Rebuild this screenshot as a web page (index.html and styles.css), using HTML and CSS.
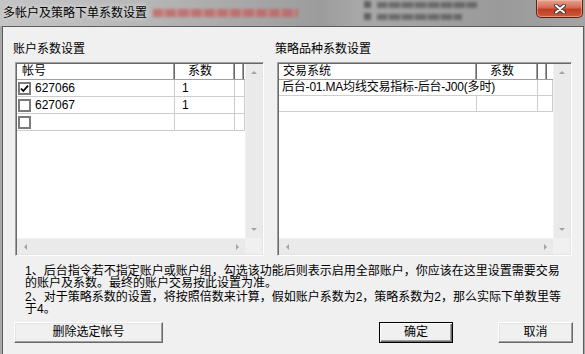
FILE: index.html
```html
<!DOCTYPE html>
<html lang="zh-CN">
<head>
    <meta charset="UTF-8">
    <title>多帐户及策略下单系数设置</title>
    <link rel="stylesheet" href="styles.css">
</head>
<body>
    <div class="window">
        <div class="titlebar">
            <span class="title">多帐户及策略下单系数设置</span>
            <div class="blur-red"></div>
            <div class="blur-dark">
                <div class="smudge"><i></i><b></b></div>
                <div class="smudge"><i></i><b class="short"></b></div>
            </div>
            <div class="close-btn">
                <svg width="14" height="10" viewBox="0 0 14 10">
                    <path d="M3 1.5 L11 8.5 M11 1.5 L3 8.5" stroke="#3c3c3c" stroke-width="4" stroke-linecap="round"/>
                    <path d="M3 1.5 L11 8.5 M11 1.5 L3 8.5" stroke="#fff" stroke-width="2" stroke-linecap="round"/>
                </svg>
            </div>
        </div>

        <div class="client">
            <div class="panels">
                <div class="panel panel-left">
                    <div class="panel-label">账户系数设置</div>
                    <div class="list">
                        <div class="list-body">
                            <div class="row head">
                                <div class="cell c-acc">帐号</div>
                                <div class="cell c-num">系数</div>
                                <div class="cell c-rest"></div>
                            </div>
                            <div class="row tall">
                                <div class="cell c-acc">
                                    <svg class="chk" width="13" height="13" viewBox="0 0 13 13">
                                        <rect x="1" y="1" width="11" height="11" fill="#fff" stroke="#7b7b7b" stroke-width="2"/>
                                        <path d="M3 6.5 L5.3 9 L10 3.6" fill="none" stroke="#000" stroke-width="1.8"/>
                                    </svg>
                                    <span>627066</span>
                                </div>
                                <div class="cell c-num">1</div>
                                <div class="cell c-rest"></div>
                            </div>
                            <div class="row tall">
                                <div class="cell c-acc">
                                    <svg class="chk" width="13" height="13" viewBox="0 0 13 13">
                                        <rect x="1" y="1" width="11" height="11" fill="#fff" stroke="#7b7b7b" stroke-width="2"/>
                                    </svg>
                                    <span>627067</span>
                                </div>
                                <div class="cell c-num">1</div>
                                <div class="cell c-rest"></div>
                            </div>
                            <div class="row tall">
                                <div class="cell c-acc">
                                    <svg class="chk" width="13" height="13" viewBox="0 0 13 13">
                                        <rect x="1" y="1" width="11" height="11" fill="#fff" stroke="#7b7b7b" stroke-width="2"/>
                                    </svg>
                                </div>
                                <div class="cell c-num"></div>
                                <div class="cell c-rest"></div>
                            </div>
                        </div>
                        <div class="vscroll">
                            <div class="arrow"><i class="tri-up"></i></div>
                            <div class="track"></div>
                            <div class="arrow"><i class="tri-down"></i></div>
                        </div>
                        <div class="hscroll">
                            <div class="arrow"><i class="tri-left"></i></div>
                            <div class="track"></div>
                            <div class="arrow"><i class="tri-right"></i></div>
                        </div>
                        <div class="corner"></div>
                    </div>
                </div>

                <div class="panel panel-right">
                    <div class="panel-label">策略品种系数设置</div>
                    <div class="list">
                        <div class="list-body">
                            <div class="row head">
                                <div class="cell c-sys">交易系统</div>
                                <div class="cell c-num2">系数</div>
                                <div class="cell c-rest"></div>
                            </div>
                            <div class="row">
                                <div class="cell c-wide">后台-01.MA均线交易指标-后台-J00(多时)</div>
                                <div class="cell c-rest"></div>
                            </div>
                            <div class="row">
                                <div class="cell c-sys"></div>
                                <div class="cell c-num2"></div>
                                <div class="cell c-rest"></div>
                            </div>
                        </div>
                        <div class="vscroll">
                            <div class="arrow"><i class="tri-up"></i></div>
                            <div class="track"></div>
                            <div class="arrow"><i class="tri-down"></i></div>
                        </div>
                        <div class="hscroll">
                            <div class="arrow"><i class="tri-left"></i></div>
                            <div class="track"></div>
                            <div class="arrow"><i class="tri-right"></i></div>
                        </div>
                        <div class="corner"></div>
                    </div>
                </div>
            </div>

            <div class="notes">
                <p>1、后台指令若不指定账户或账户组，勾选该功能后则表示启用全部账户，你应该在这里设置需要交易<br>的账户及系数。最终的账户交易按此设置为准。</p>
                <p>2、对于策略系数的设置，将按照倍数来计算，假如账户系数为2，策略系数为2，那么实际下单数里等<br>于4。</p>
            </div>

            <div class="buttons">
                <button class="btn btn-delete">删除选定帐号</button>
                <button class="btn btn-ok">确定</button>
                <button class="btn btn-cancel">取消</button>
            </div>
        </div>
    </div>
</body>
</html>
```

FILE: styles.css
```css
body {
    margin: 0;
    padding: 0;
    width: 585px;
    height: 354px;
    overflow: hidden;
    background: #a8a8a8;
    font-family: "Liberation Sans", "Noto Sans CJK SC", sans-serif;
    font-size: 12px;
    color: #000;
}
.window {
    width: 585px;
    height: 354px;
    display: flex;
    flex-direction: column;
}

/* Title bar */
.titlebar {
    height: 26px;
    display: flex;
    align-items: flex-start;
    background: linear-gradient(to right, #c4c4c4 0px, #b6b6b6 150px, #9c9c9c 320px, #a8a8a8 360px, #9a9a9a 500px, #a4a4a4 585px);
    overflow: hidden;
}
.title {
    margin: 5px 0 0 3px;
    line-height: 16px;
    white-space: nowrap;
    text-shadow: 0 0 4px #e0e0e0, 0 0 6px #d8d8d8;
}
/* blurred background window, not readable in the original */
.blur-red {
    margin: 9px 0 0 6px;
    width: 145px;
    height: 8px;
    background: repeating-linear-gradient(to right, #c45a5a 0px, #c45a5a 9px, #d49a9a 11px, #c45a5a 13px);
    filter: blur(1.5px);
    opacity: 0.7;
}
.blur-dark {
    margin: 1px 0 0 66px;
    display: flex;
    flex-direction: column;
    gap: 5px;
    filter: blur(1.5px);
    opacity: 0.6;
}
.smudge {
    display: flex;
    align-items: center;
    gap: 6px;
}
.smudge i {
    width: 7px;
    height: 7px;
    background: #333;
}
.smudge b {
    width: 100px;
    height: 6px;
    background: repeating-linear-gradient(to right, #444 0px, #444 9px, #888 11px, #444 13px);
}
.smudge b.short {
    width: 85px;
}
.close-btn {
    margin-left: auto;
    margin-right: 2px;
    width: 45px;
    height: 17px;
    display: flex;
    align-items: center;
    justify-content: center;
    border: 1px solid #5b2318;
    border-top: none;
    border-radius: 0 0 5px 5px;
    background: linear-gradient(to bottom, #e4a392 0%, #d56a52 45%, #c03c22 55%, #cf5a3e 100%);
    box-shadow: inset 0 0 0 1px rgba(255, 200, 180, 0.5);
}

/* Client area */
.client {
    flex: 1;
    margin: 0 1px 0 2px;
    background: #f0f0f0;
    border: 1px solid #5c5c5c;
    border-bottom: none;
    display: flex;
    flex-direction: column;
}
.panels {
    display: flex;
    gap: 11px;
    padding: 15px 0 0 10px;
}
.panel-label {
    line-height: 14px;
    margin-bottom: 6px;
    white-space: nowrap;
}
.panel-left .list {
    margin-left: 2px;
    width: 249px;
}
.panel-right .list {
    margin-left: 2px;
    width: 295px;
}

/* List view */
.list {
    box-sizing: border-box;
    height: 194px;
    border: 1px solid;
    border-color: #a0a0a0 #ffffff #ffffff #a0a0a0;
    box-shadow: inset 1px 1px #696969, inset -1px -1px #e3e3e3;
    padding: 1px;
    display: grid;
    grid-template-columns: 1fr 17px;
    grid-template-rows: 1fr 16px;
    background: #fff;
}
.list-body {
    background: #fff;
    overflow: hidden;
}
.row {
    display: flex;
    height: 15px;
    border-bottom: 1px solid #cdcdcd;
}
.row.tall {
    height: 16px;
}
.row.head {
    height: 15px;
    border-bottom: 1px solid #a0a0a0;
    background: #fff;
}
.cell {
    box-sizing: border-box;
    line-height: 15px;
    white-space: nowrap;
    overflow: hidden;
    border-right: 1px solid #cdcdcd;
    display: flex;
    align-items: center;
}
.head .cell {
    border-right: 1px solid #696969;
    box-shadow: inset -1px 0 #a0a0a0;
}
.c-acc {
    width: 158px;
    padding-left: 1px;
}
.head .c-acc {
    padding-left: 5px;
}
.c-num {
    width: 60px;
    padding-left: 7px;
}
.head .c-num,
.head .c-num2 {
    padding-left: 13px;
}
.c-sys {
    width: 198px;
    padding-left: 3px;
}
.head .c-sys {
    padding-left: 4px;
}
.c-num2 {
    width: 61px;
}
.c-wide {
    width: 259px;
    padding-left: 3px;
    letter-spacing: -0.2px;
}
.c-rest {
    flex: 1;
}
.head .c-rest {
    flex: 0 0 9px;
}
.chk {
    flex: none;
    margin-right: 4px;
}

/* Scroll bars */
.vscroll {
    display: flex;
    flex-direction: column;
    background: #eaeaea;
    border-left: 1px solid #f2f2f2;
}
.hscroll {
    display: flex;
    background: #eaeaea;
    border-top: 1px solid #f2f2f2;
}
.vscroll .track,
.hscroll .track {
    flex: 1;
}
.arrow {
    flex: 0 0 16px;
    height: 16px;
    display: flex;
    align-items: center;
    justify-content: center;
}
.vscroll .arrow {
    flex-basis: 17px;
}
.corner {
    background: #f0f0f0;
}
.tri-up {
    border-left: 3px solid transparent;
    border-right: 3px solid transparent;
    border-bottom: 3px solid #a3a3a3;
}
.tri-down {
    border-left: 3px solid transparent;
    border-right: 3px solid transparent;
    border-top: 3px solid #a3a3a3;
}
.tri-left {
    border-top: 3px solid transparent;
    border-bottom: 3px solid transparent;
    border-right: 3px solid #a3a3a3;
}
.tri-right {
    border-top: 3px solid transparent;
    border-bottom: 3px solid transparent;
    border-left: 3px solid #a3a3a3;
}

/* Notes */
.notes {
    margin-top: 9px;
    padding-left: 22px;
    white-space: nowrap;
}
.notes p {
    margin: 0;
    line-height: 12px;
}
.notes p + p {
    margin-top: 2px;
}

/* Buttons */
.buttons {
    display: flex;
    margin-top: 7px;
    padding: 0 10px 0 11px;
}
.btn {
    box-sizing: border-box;
    height: 21px;
    padding: 0;
    font-family: "Liberation Sans", "Noto Sans CJK SC", sans-serif;
    font-size: 12px;
    line-height: 17px;
    color: #000;
    background: #f0f0f0;
    border: 1px solid;
    border-color: #ffffff #696969 #696969 #ffffff;
    box-shadow: inset -1px -1px #a0a0a0, inset 1px 1px #e3e3e3;
}
.btn-delete {
    width: 149px;
}
.btn-ok {
    width: 74px;
    margin-left: auto;
    border-color: #000;
    box-shadow: inset 1px 1px #fff, inset -1px -1px #696969, inset -2px -2px #a0a0a0;
}
.btn-cancel {
    width: 75px;
    margin-left: 45px;
}
```
